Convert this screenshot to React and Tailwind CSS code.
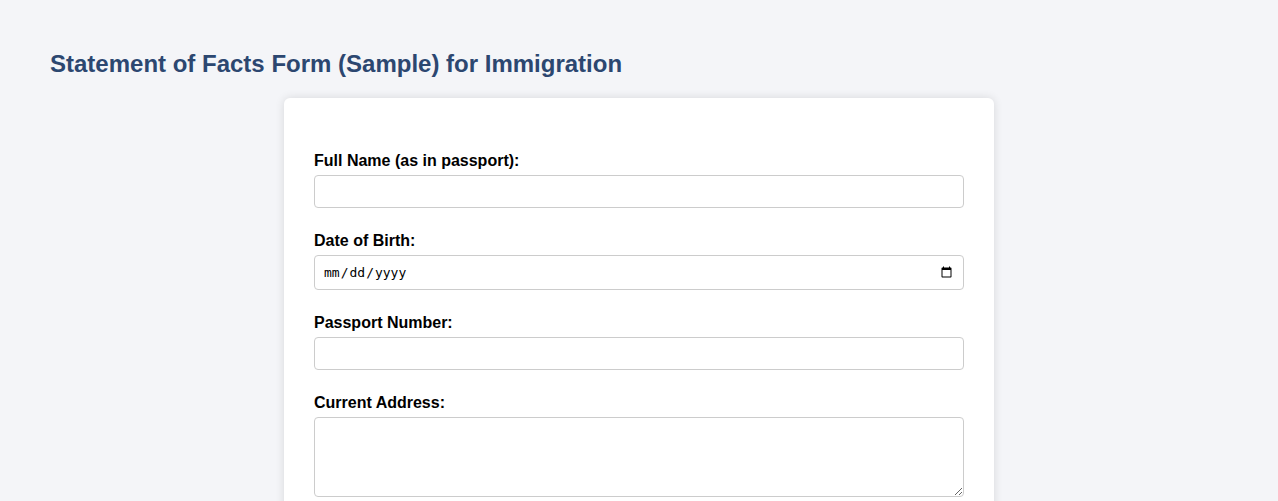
import React from "react";

const Field = ({ label, children }) => (
  <div className="mb-[23px]">
    <label className="block mb-[5px] text-[16px] leading-[19px] font-bold text-black">
      {label}
    </label>
    {children}
  </div>
);

const inputCls =
  "block w-full h-[33px] px-2 border border-[#cccccc] rounded-[4px] bg-white text-[14px] outline-none";

export default function App() {
  return (
    <div className="min-h-screen bg-[#f4f5f8] font-['Liberation_Sans',Arial,sans-serif] px-[50px] pt-[50px]">
      <h1 className="text-[24px] leading-[28px] font-bold text-[#2c4770] mb-[20px]">
        Statement of Facts Form (Sample) for Immigration
      </h1>
      <div className="mx-auto w-[710px] bg-white rounded-[6px] shadow-[0_0_10px_rgba(0,0,0,0.12)] px-[30px] pt-[53px] pb-[30px]">
        <form>
          <Field label="Full Name (as in passport):">
            <input type="text" className={inputCls} />
          </Field>
          <Field label="Date of Birth:">
            <input
              type="date"
              className="block w-full h-[35px] px-2 border border-[#cccccc] rounded-[4px] bg-white text-[13px] font-['DejaVu_Sans_Mono',monospace] outline-none"
            />
          </Field>
          <Field label="Passport Number:">
            <input type="text" className={inputCls} />
          </Field>
          <Field label="Current Address:">
            <textarea className="block w-full h-[80px] px-2 py-1 border border-[#cccccc] rounded-[4px] bg-white text-[14px] outline-none" />
          </Field>
        </form>
      </div>
    </div>
  );
}
